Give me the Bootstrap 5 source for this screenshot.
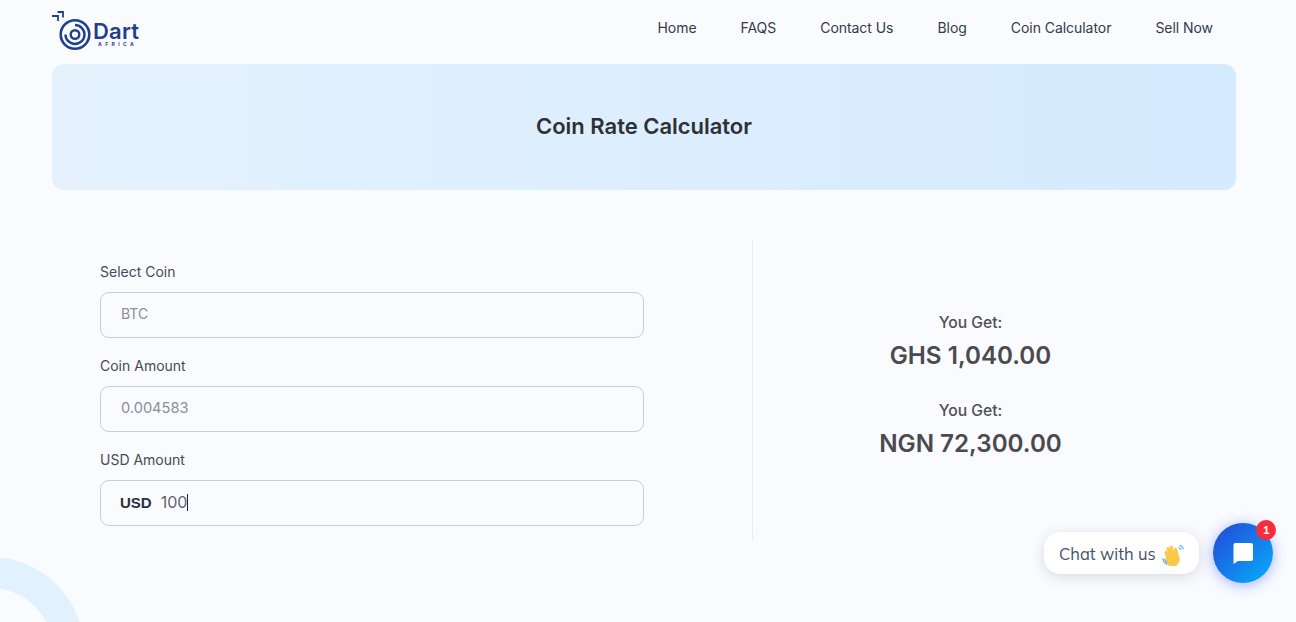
<!DOCTYPE html>
<html lang="en">
<head>
<meta charset="utf-8">
<title>Coin Rate Calculator</title>
<link rel="stylesheet" href="https://cdn.jsdelivr.net/npm/bootstrap@5.3.0/dist/css/bootstrap.min.css">
<style>
body{background:#fafbff;font-family:Inter,"Liberation Sans",sans-serif;color:#3a3f4b}
.page-frame{position:relative;height:622px;overflow:hidden}
.page-wrap{padding:0 60px 0 52px}
.top-bar{height:64px;padding:0}
.brand-box{display:flex;align-items:flex-start;padding:0;margin:0;height:64px;width:90px;position:relative}
.brand-word{position:absolute;left:41px;top:21px;font:600 22px/20px Inter,sans-serif;color:#1f3f8f;letter-spacing:.2px}
.brand-sub{position:absolute;left:46px;top:42px;font:700 5px/5px Inter,sans-serif;color:#1f3f8f;letter-spacing:3.4px}
.menu-link{font-size:14px;color:#343a46;padding:0;line-height:20px;text-decoration:none;letter-spacing:-.05px}
.menu-list{gap:44px;margin-right:23px;margin-top:-10px}
.hero-band{height:126px;border-radius:12px;background:linear-gradient(90deg,#e5f2fe,#d4eafe);width:1184px;padding-bottom:2px}
.hero-band h1{font-size:22px;font-weight:600;color:#2f3035;margin:0;letter-spacing:-.02px}
.calc-row{margin-top:50px;width:1184px;padding:0 48px}
.calc-left{width:653px;height:301px;border-right:1px solid #e3edf6;padding-top:23px;padding-right:108px}
.calc-right{width:435px;padding-top:73px}
.field-label{font-size:14px;line-height:18px;color:#454a55;margin:0 0 11px;display:block}
.field-box{height:46px;border:1px solid #c9ccd8;border-radius:9px;background:#fafbff;padding:0 20px;font-size:14.6px;color:#8a8f98;margin-bottom:19px;display:flex;align-items:center}
.field-box.first{padding-bottom:4px;font-size:14px}
.field-box.last{color:#5b6470;font-size:16px;padding-bottom:2px}
.cur-tag{font:700 15px "Liberation Sans",sans-serif;color:#2b3040;margin:0 9px 0 -1px}
.caret-line{display:inline-block;width:1px;height:17px;background:#222}
.get-label{font-size:15.7px;font-weight:500;color:#4f4f55;line-height:20px;margin-bottom:7px}
.get-val{font-size:24.2px;font-weight:600;color:#4a4a4f;line-height:31px;margin-bottom:30px}
.corner-ring{position:absolute;left:-103.5px;top:556.5px;width:187px;height:187px;border-radius:50%;border:31.5px solid #e2f1fe}
.chat-pill{position:absolute;left:1044px;top:532px;width:155px;height:42px;border-radius:16px;background:#fff;box-shadow:0 3px 14px rgba(40,50,80,.16);font:400 16.5px/44px Mulish,"Noto Sans",Lato,sans-serif;color:#46506a;padding-left:15px;white-space:nowrap}
.chat-fab{position:absolute;left:1213px;top:523px;width:60px;height:60px;border-radius:50%;background:linear-gradient(135deg,#2346d8,#06b0fb);box-shadow:0 2px 14px rgba(50,90,255,.45);display:flex;align-items:center;justify-content:center}
.chat-count{position:absolute;left:1256px;top:520px;width:20px;height:20px;border-radius:50%;background:#fa2b3c;color:#fff;font:700 12px/20px Mulish,"Noto Sans",sans-serif;text-align:center}
.wave-icon{vertical-align:-6px;margin-left:6px}
</style>
</head>
<body>
<div class="page-frame">
<div class="corner-ring"></div>
<div class="page-wrap">
  <nav class="navbar navbar-expand top-bar">
    <a class="brand-box text-decoration-none" href="#">
      <svg width="46" height="52" viewBox="0 0 46 52" aria-hidden="true">
        <g fill="none" stroke="#1f3f8f">
          <path d="M0 16h6v5M5.500 12h5.500v5.500" stroke-width="1.800"/>
          <circle cx="23" cy="34.500" r="14.300" stroke-width="2.600"/>
          <path d="M23 25a9.500 9.500 0 1 1-9.500 9.500" stroke-width="2.400"/>
          <circle cx="23" cy="34.500" r="4.300" stroke-width="2.400"/>
        </g>
      </svg>
      <span class="brand-word">Dart</span>
      <span class="brand-sub">AFRICA</span>
    </a>
    <ul class="navbar-nav ms-auto flex-row menu-list">
      <li class="nav-item"><a class="menu-link" href="#">Home</a></li>
      <li class="nav-item"><a class="menu-link" href="#">FAQS</a></li>
      <li class="nav-item"><a class="menu-link" href="#">Contact Us</a></li>
      <li class="nav-item"><a class="menu-link" href="#">Blog</a></li>
      <li class="nav-item"><a class="menu-link" href="#">Coin Calculator</a></li>
      <li class="nav-item"><a class="menu-link" href="#">Sell Now</a></li>
    </ul>
  </nav>
  <section class="hero-band d-flex align-items-center justify-content-center">
    <h1>Coin Rate Calculator</h1>
  </section>
  <section class="calc-row d-flex">
    <div class="calc-left">
      <label class="field-label">Select Coin</label>
      <div class="field-box first">BTC</div>
      <label class="field-label">Coin Amount</label>
      <div class="field-box">0.004583</div>
      <label class="field-label">USD Amount</label>
      <div class="field-box last"><span class="cur-tag">USD</span>100<span class="caret-line"></span></div>
    </div>
    <div class="calc-right text-center">
      <div class="get-label">You Get:</div>
      <div class="get-val">GHS 1,040.00</div>
      <div class="get-label">You Get:</div>
      <div class="get-val">NGN 72,300.00</div>
    </div>
  </section>
</div>
<div class="chat-pill">Chat with us<svg class="wave-icon" width="22" height="22" viewBox="0 0 22 22" aria-hidden="true">
    <path d="M4.500 14 2.900 8.700c-.5-1.500 1.500-2.300 2.200-.9l1.400 3-1.600-6c-.4-1.600 1.800-2.200 2.300-.6l1.900 5.300-1-6.300c-.2-1.600 2.100-1.900 2.400-.3l1.400 5.900.4-3.600c.2-1.500 2.300-1.400 2.500.1l2.200 8.200c1 3.900-.8 7.400-4.600 8.400-3.700.9-6.800-.8-8.700-4z" fill="#fbc94a" stroke="#fbc94a" stroke-width=".9"/>
    <path d="M.8 14.500c.3 2.500 1.500 4.500 3.400 5.800M2.700 15c.3 1.300.9 2.400 1.800 3.300M18 1.300c1.500.6 2.700 1.800 3.300 3.400M16.900 3.500c.9.400 1.600 1.100 2 2" fill="none" stroke="#5aaee8" stroke-width="1.200" stroke-linecap="round"/>
  </svg></div>
<div class="chat-fab">
  <svg width="20" height="22" viewBox="0 0 20 22" aria-hidden="true"><path d="M2 1h16a2 2 0 0 1 2 2v14a2 2 0 0 1-2 2H5l-4.500 3V3a2 2 0 0 1 1.500-2z" fill="#fff"/></svg>
</div>
<div class="chat-count">1</div>
</div>
<script src="https://cdn.jsdelivr.net/npm/bootstrap@5.3.0/dist/js/bootstrap.bundle.min.js"></script>
</body>
</html>
